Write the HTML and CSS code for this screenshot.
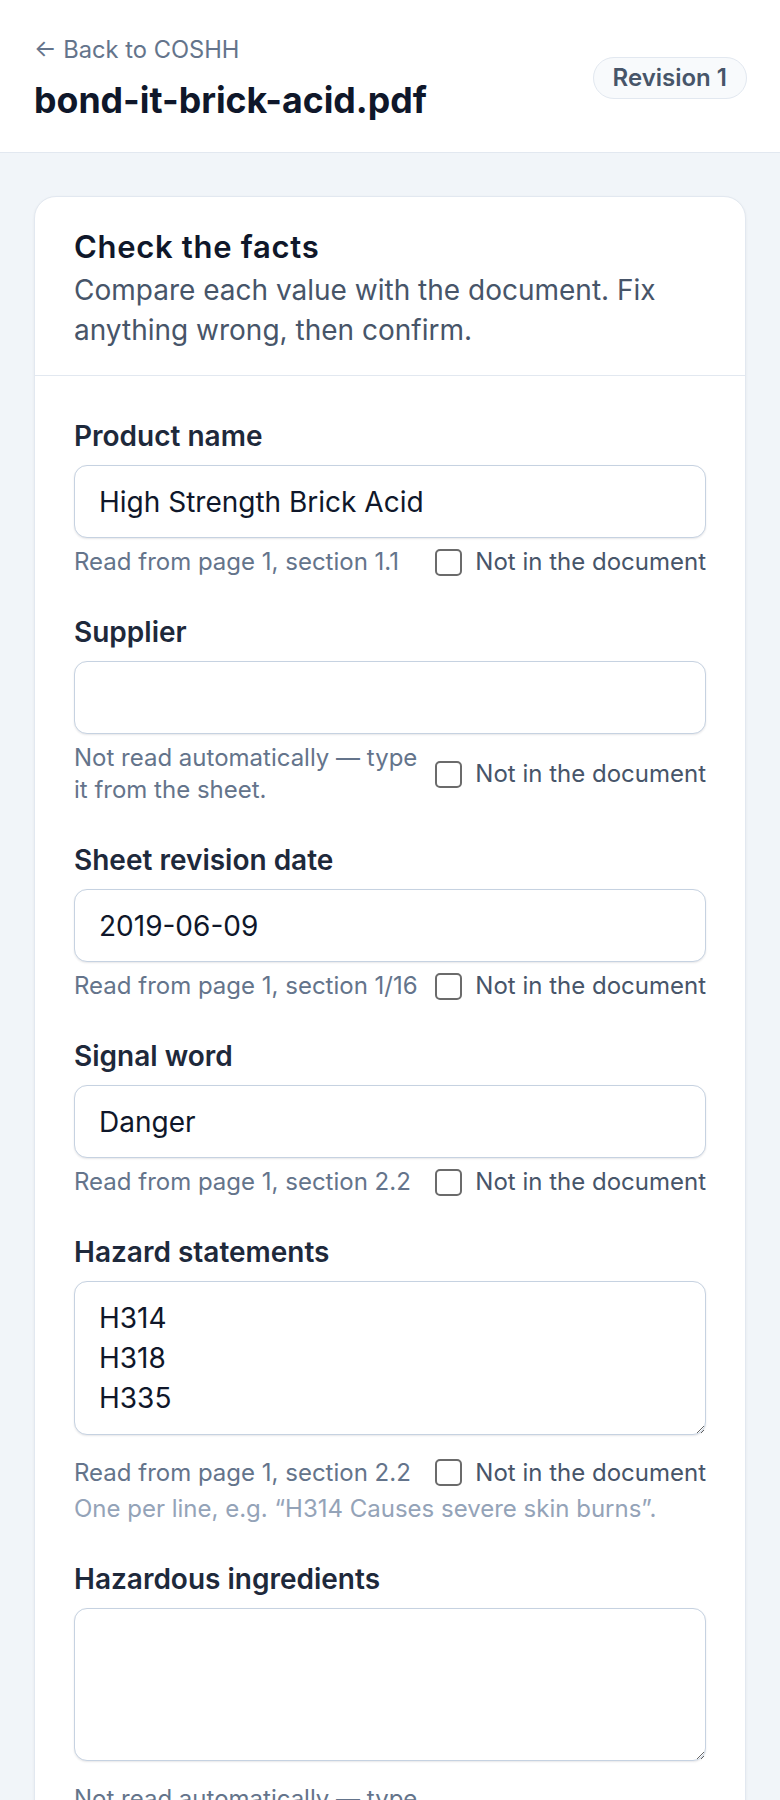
FILE: index.html
```html
<!DOCTYPE html>
<html>
    <head>
        <meta charset="utf-8">
        <title>Check the facts - bond-it-brick-acid.pdf</title>
        <link rel="stylesheet" href="styles.css">
    </head>
    <body>
        <header class="top">
            <div class="top-left">
                <a class="back" href="#">&larr; Back to COSHH</a>
                <h1 class="doc-title">bond-it-brick-acid.pdf</h1>
            </div>
            <span class="badge">Revision 1</span>
        </header>

        <main class="page">
            <section class="card">
                <div class="card-head">
                    <h2>Check the facts</h2>
                    <p>Compare each value with the document. Fix anything wrong, then confirm.</p>
                </div>

                <form class="card-body">
                    <div class="field">
                        <label class="field-label" for="productName">Product name</label>
                        <input class="field-input" type="text" id="productName" value="High Strength Brick Acid">
                        <div class="hint-row">
                            <span class="hint">Read from page 1, section 1.1</span>
                            <label class="missing"><input type="checkbox" class="box"> Not in the document</label>
                        </div>
                    </div>

                    <div class="field">
                        <label class="field-label" for="supplier">Supplier</label>
                        <input class="field-input" type="text" id="supplier" value="">
                        <div class="hint-row">
                            <span class="hint">Not read automatically — type it from the sheet.</span>
                            <label class="missing"><input type="checkbox" class="box"> Not in the document</label>
                        </div>
                    </div>

                    <div class="field">
                        <label class="field-label" for="revisionDate">Sheet revision date</label>
                        <input class="field-input" type="text" id="revisionDate" value="2019-06-09">
                        <div class="hint-row">
                            <span class="hint">Read from page 1, section 1/16</span>
                            <label class="missing"><input type="checkbox" class="box"> Not in the document</label>
                        </div>
                    </div>

                    <div class="field">
                        <label class="field-label" for="signalWord">Signal word</label>
                        <input class="field-input" type="text" id="signalWord" value="Danger">
                        <div class="hint-row">
                            <span class="hint">Read from page 1, section 2.2</span>
                            <label class="missing"><input type="checkbox" class="box"> Not in the document</label>
                        </div>
                    </div>

                    <div class="field">
                        <label class="field-label" for="hazards">Hazard statements</label>
                        <textarea class="field-input area" id="hazards" rows="3">H314
H318
H335</textarea>
                        <div class="hint-row after-area">
                            <span class="hint">Read from page 1, section 2.2</span>
                            <label class="missing"><input type="checkbox" class="box"> Not in the document</label>
                        </div>
                        <p class="note">One per line, e.g. “H314 Causes severe skin burns”.</p>
                    </div>

                    <div class="field">
                        <label class="field-label" for="ingredients">Hazardous ingredients</label>
                        <textarea class="field-input area" id="ingredients" rows="3"></textarea>
                        <div class="hint-row after-area">
                            <span class="hint">Not read automatically — type it from the sheet.</span>
                            <label class="missing"><input type="checkbox" class="box"> Not in the document</label>
                        </div>
                    </div>
                </form>
            </section>
        </main>
    </body>
</html>
```

FILE: styles.css
```css
body {
    margin: 0;
    background-color: #f1f5f9;
    font-family: Inter, "Liberation Sans", sans-serif;
    color: #0f172a;
}
.top {
    display: flex;
    justify-content: space-between;
    align-items: center;
    padding: 34px 33px 30px 34px;
    background-color: #ffffff;
    border-bottom: 1.5px solid #e2e8f0;
}
.back {
    display: block;
    font-size: 23.7px;
    line-height: 32px;
    color: #64748b;
    text-decoration: none;
}
.doc-title {
    margin: 12px 0 0 0;
    font-size: 35.7px;
    line-height: 44px;
    font-weight: 700;
    color: #0f172a;
}
.badge {
    padding: 2px 19px;
    font-size: 24px;
    line-height: 36px;
    font-weight: 600;
    color: #475569;
    background-color: #f8fafc;
    border: 1.5px solid #e2e8f0;
    border-radius: 999px;
}
.page {
    padding: 43px 34px;
}
.card {
    background-color: #ffffff;
    border: 1px solid #e2e8f0;
    border-radius: 22px;
    box-shadow: 0 1px 3px rgba(15, 23, 42, 0.06);
}
.card-head {
    padding: 30px 39px 25px 39px;
    border-bottom: 1.5px solid #e2e8f0;
}
.card-head h2 {
    margin: 0;
    font-size: 31px;
    line-height: 39px;
    font-weight: 600;
    letter-spacing: 0.7px;
    color: #0f172a;
}
.card-head p {
    margin: 4px 0 0 0;
    font-size: 28px;
    line-height: 40px;
    color: #475569;
}
.card-body {
    display: flex;
    flex-direction: column;
    gap: 35px;
    padding: 41px 39px 40px 39px;
}
.field {
    display: flex;
    flex-direction: column;
}
.field-label {
    font-size: 28px;
    line-height: 38px;
    font-weight: 600;
    color: #1e293b;
    margin-bottom: 10px;
}
.field-input {
    display: block;
    box-sizing: border-box;
    width: 100%;
    margin: 0;
    padding: 15.5px 24px;
    font-family: Inter, "Liberation Sans", sans-serif;
    font-size: 28px;
    line-height: 40px;
    color: #0f172a;
    background-color: #ffffff;
    border: 1.6px solid #c6d2e1;
    border-radius: 13px;
    box-shadow: 0 1px 2px rgba(15, 23, 42, 0.1);
    outline: none;
}
.area {
    height: 153.5px;
    resize: vertical;
}
.hint-row {
    display: flex;
    justify-content: space-between;
    align-items: center;
    gap: 16px;
    margin-top: 8px;
}
.hint-row.after-area {
    margin-top: 22px;
}
.hint {
    flex: 1;
    min-width: 0;
    font-size: 24px;
    line-height: 32px;
    color: #64748b;
}
.missing {
    display: flex;
    align-items: center;
    gap: 13px;
    flex-shrink: 0;
    white-space: nowrap;
    font-size: 24px;
    line-height: 32px;
    color: #475569;
}
.box {
    appearance: none;
    -webkit-appearance: none;
    width: 27px;
    height: 27px;
    margin: 0;
    border: 2px solid #6b6b6b;
    border-radius: 5px;
    background-color: #ffffff;
}
.note {
    margin: 4px 0 0 0;
    font-size: 24px;
    line-height: 32px;
    color: #94a3b8;
}
```
